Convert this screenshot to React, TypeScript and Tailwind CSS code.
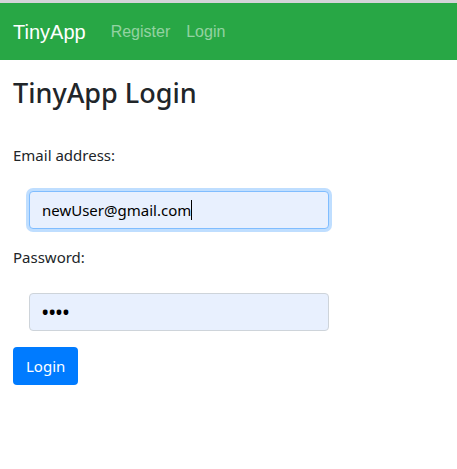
import type React from "react"

const Navbar: React.FC = () => {
  return (
    <nav className="flex items-center bg-[#28a745] px-[13px] h-[57px] font-['Liberation_Sans',Arial,sans-serif]">
      <a href="#" className="text-white text-[20px] leading-[30px] mr-[17px]">
        TinyApp
      </a>
      <div className="flex text-[16px] leading-6">
        <a href="#" className="text-white/50 px-2">Register</a>
        <a href="#" className="text-white/50 px-2">Login</a>
      </div>
    </nav>
  )
}

const App: React.FC = () => {
  return (
    <div className="min-h-[469px] bg-white font-['Noto_Sans',sans-serif] text-[#212529]">
      <div className="h-[3px] bg-[#d4d4d8]" />
      <Navbar />

      <main className="px-[13px] pt-[17px]">
        <h2 className="text-[27px] leading-[1.2] font-medium mb-2">TinyApp Login</h2>

        <form className="mt-[34px]" onSubmit={(e) => e.preventDefault()}>
          <label className="inline-block text-[15px] leading-6 mb-2">Email address:</label>
          {/* focused, autofilled email field */}
          <div className="m-4 w-[300px] h-[38px] flex items-center px-3 rounded border border-[#80bdff] bg-[#e8f0fe] shadow-[0_0_0_3px_rgba(0,123,255,0.25)] text-[15px] text-black">
            <span>newUser@gmail.com</span>
            <span className="inline-block w-px h-[20px] bg-black" />
          </div>

          <label className="inline-block text-[15px] leading-6 mb-2">Password:</label>
          <div className="m-4 w-[300px] h-[38px] flex items-center px-3 rounded border border-[#ced4da] bg-[#e8f0fe] text-[17px] font-bold text-black tracking-[0.5px]">
            ••••
          </div>

          <button
            type="submit"
            className="h-[38px] px-[13px] rounded bg-[#007bff] text-white text-[15px] leading-6"
          >
            Login
          </button>
        </form>
      </main>
    </div>
  )
}

export default App
